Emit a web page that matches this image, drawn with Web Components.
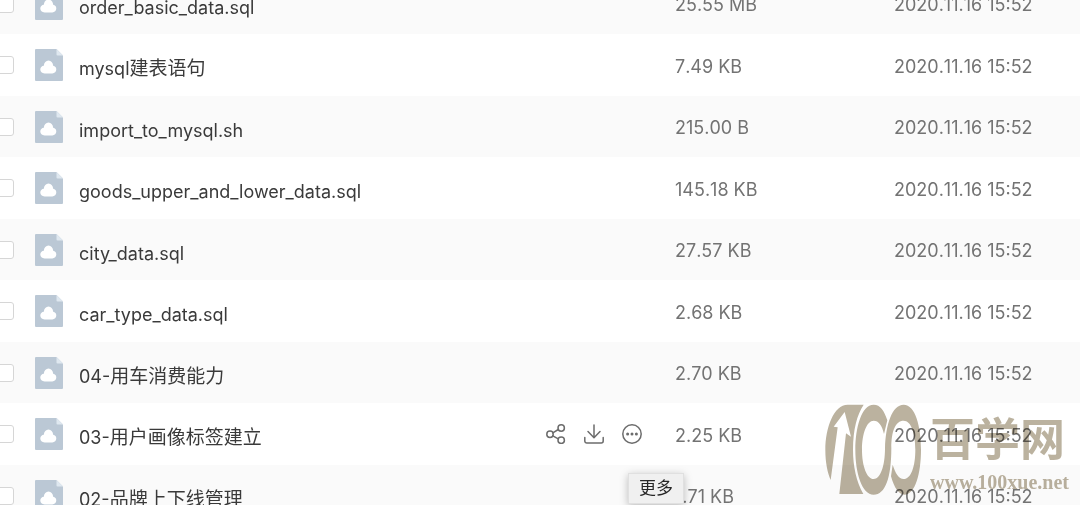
<!DOCTYPE html>
<html lang="zh-CN">
<head>
<meta charset="utf-8">
<title>文件列表</title>
<style>
  :root {
    --colors-text: #3a3a3a;
    --colors-muted: #737373;
    --colors-stripe: #fafafa;
    --colors-border: #d6d6d6;
    --colors-mark: #bbb29f;
  }

  body {
    margin: 0;
    overflow: hidden;
    background: #fff;
    font-family: Inter, "Noto Sans CJK SC", sans-serif;
  }
</style>
</head>
<body>
<file-app></file-app>

<script>
const createTemplate = (html) => {
  const template = document.createElement('template');
  template.innerHTML = html;
  return template;
};

const files = [
  { name: 'order_basic_data.sql', size: '25.55 MB' },
  { name: 'mysql建表语句', size: '7.49 KB' },
  { name: 'import_to_mysql.sh', size: '215.00 B' },
  { name: 'goods_upper_and_lower_data.sql', size: '145.18 KB' },
  { name: 'city_data.sql', size: '27.57 KB' },
  { name: 'car_type_data.sql', size: '2.68 KB' },
  { name: '04-用车消费能力', size: '2.70 KB' },
  { name: '03-用户画像标签建立', size: '2.25 KB', active: true },
  { name: '02-品牌上下线管理', size: '1.71 KB' },
];

// Chinese runs are set one size up from the latin ones
const markHan = (name) => name.replace(/[\u4e00-\u9fff]+/g, '<span>$&</span>');

class BaseElement extends HTMLElement {
  constructor() {
    super();
    this.attachShadow({ mode: 'open' });
    this.shadowRoot.appendChild(this.constructor.template.content.cloneNode(true));
  }
}

class FileIcon extends BaseElement {
  static template = createTemplate(`
    <style>
      :host { display: block; flex: none; width: 28px; height: 32px; }
      svg { display: block; }
    </style>
    <svg width="28" height="32" viewBox="0 0 28 32" aria-hidden="true">
      <path d="M1 0H21.500L28 6.500V31a1 1 0 0 1-1 1H1a1 1 0 0 1-1-1V1a1 1 0 0 1 1-1Z" fill="#bbc8d5"/>
      <path d="M21.500 0L28 6.500H22.500a1 1 0 0 1-1-1Z" fill="#dfe8f0"/>
      <path d="M9.600 24.400C7 24.400 5.300 22.700 5.300 20.500C5.300 18.400 6.800 17 8.800 16.800C9.100 13.600 11 11.500 13.500 11.500C16 11.500 17.900 13.600 18.200 16.800C20.100 17 21.300 18.500 21.300 20.500C21.300 22.700 19.600 24.400 17.300 24.400Z" fill="#fff"/>
    </svg>
  `);
}

class HoverTip extends BaseElement {
  static template = createTemplate(`
    <style>
      :host {
        display: block;
        padding: 2px 10px;
        border: 1px solid #e0e0e0;
        background: #f0f0f0;
        box-shadow: 0 2px 8px rgba(0, 0, 0, .25);
        color: #262626;
        font-size: 17px;
        line-height: 25px;
        white-space: nowrap;
      }
    </style>
    <slot></slot>
  `);
}

class RowActions extends BaseElement {
  static template = createTemplate(`
    <style>
      :host { display: flex; flex: none; gap: 18px; }
      button {
        display: block;
        width: 20px;
        height: 20px;
        padding: 0;
        border: 0;
        background: none;
        color: #6c6c6c;
        cursor: pointer;
      }
      svg { display: block; fill: none; stroke: currentColor; stroke-width: 1.5; stroke-linecap: round; stroke-linejoin: round; }
      .more { position: relative; }
      hover-tip { position: absolute; top: 49px; left: 6px; z-index: 1; }
    </style>
    <button type="button" aria-label="分享">
      <svg width="20" height="20" viewBox="0 0 20 20">
        <circle cx="4" cy="10.300" r="3.200"/>
        <circle cx="15.200" cy="4" r="3.200"/>
        <circle cx="15.200" cy="16.200" r="3.200"/>
        <path d="M6.800 8.800L12.300 5.500M6.800 11.800L12.300 14.800"/>
      </svg>
    </button>
    <button type="button" aria-label="下载">
      <svg width="20" height="20" viewBox="0 0 20 20">
        <path d="M10 1V13.500M4 7.500L10 13.700L16 7.500M.8 13.500V17a2 2 0 0 0 2 2H17.200a2 2 0 0 0 2-2V13.500"/>
      </svg>
    </button>
    <button type="button" class="more" aria-label="更多">
      <svg width="20" height="20" viewBox="0 0 20 20">
        <circle cx="10" cy="10" r="9.200"/>
        <g fill="currentColor" stroke="none">
          <circle cx="5.600" cy="10" r="1.500"/>
          <circle cx="10" cy="10" r="1.500"/>
          <circle cx="14.400" cy="10" r="1.500"/>
        </g>
      </svg>
      <hover-tip>更多</hover-tip>
    </button>
  `);
}

class FileList extends BaseElement {
  static template = createTemplate(`
    <style>
      /* the list is scrolled part of a row down and slightly to the right */
      :host { display: block; margin: -27px 0 0 -4px; }
      table {
        width: 100%;
        border-collapse: collapse;
        table-layout: fixed;
      }
      .size { width: 219px; }
      .date { width: 186px; }
      tr { height: 61px; background: var(--colors-stripe); }
      tr:nth-child(even) { height: 62px; background: #fff; }
      td {
        padding: 0;
        color: var(--colors-muted);
        font-size: 18px;
        line-height: 24px;
        white-space: nowrap;
      }
      td.text { padding-top: 3px; font-kerning: none; }
      .file { display: flex; align-items: center; padding-right: 33px; }
      input {
        flex: none;
        appearance: none;
        width: 18px;
        height: 18px;
        margin: 0 21px 0 0;
        border: 1px solid var(--colors-border);
        border-radius: 3px;
        background: #fff;
      }
      a {
        flex: 1;
        padding: 8px 0 0 16px;
        color: var(--colors-text);
        text-decoration: none;
      }
      a span { font-size: 19px; }
    </style>
    <table>
      <colgroup><col><col class="size"><col class="date"></colgroup>
      <tbody></tbody>
    </table>
  `);

  connectedCallback() {
    this.shadowRoot.querySelector('tbody').innerHTML = files.map(({ name, size, active }, index) => `
      <tr>
        <td>
          <div class="file">
            <input type="checkbox" aria-labelledby="file-${index}">
            <file-icon></file-icon>
            <a href="#" id="file-${index}">${markHan(name)}</a>
            ${active ? '<row-actions></row-actions>' : ''}
          </div>
        </td>
        <td class="text">${size}</td>
        <td class="text">2020.11.16 15:52</td>
      </tr>
    `).join('');
  }
}

class SiteWatermark extends BaseElement {
  static template = createTemplate(`
    <style>
      :host {
        display: flex;
        gap: 8px;
        color: var(--colors-mark);
        mix-blend-mode: multiply;
        pointer-events: none;
      }
      svg { display: block; fill: currentColor; }
      .name {
        font: bold 45px/66px "Noto Sans CJK SC", sans-serif;
      }
      .site {
        font: bold 20px/24px "Liberation Serif", serif;
      }
    </style>
    <svg width="97" height="92" viewBox="14 18 291 276" aria-hidden="true">
      <path d="M130 20H82C40 20 15 90 15 155C15 195 22 225 31 246L52 88L40 86L73 42L92 116L77 106L57 288H129C108 250 98 205 98 155C98 95 110 50 130 20Z"/>
      <path d="M160 20C123 20 105 90 105 155C105 225 125 290 160 290C195 290 213 240 213 150C213 100 225 68 250 68C272 68 285 105 285 155C285 205 272 243 250 243C235 243 225 225 217 200L212 235C222 270 235 290 252 290C285 290 302 225 302 155C302 85 285 20 250 20C215 20 196 80 194 150C194 205 180 243 160 243C140 243 125 205 125 155C125 105 140 68 160 68C175 68 185 82 191 108L201 67C192 38 180 20 160 20Z"/>
    </svg>
    <div>
      <div class="name">百学网</div>
      <div class="site">www.100xue.net</div>
    </div>
  `);
}

class FileApp extends BaseElement {
  static template = createTemplate(`
    <style>
      :host {
        display: block;
        position: relative;
        height: 100vh;
        overflow: hidden;
      }
      /* floats over the rows in the corner */
      site-watermark { position: absolute; right: 11px; bottom: 9px; }
    </style>
    <file-list></file-list>
    <site-watermark></site-watermark>
  `);
}

window.customElements.define('file-icon', FileIcon);
window.customElements.define('hover-tip', HoverTip);
window.customElements.define('row-actions', RowActions);
window.customElements.define('file-list', FileList);
window.customElements.define('site-watermark', SiteWatermark);
window.customElements.define('file-app', FileApp);
</script>
</body>
</html>
